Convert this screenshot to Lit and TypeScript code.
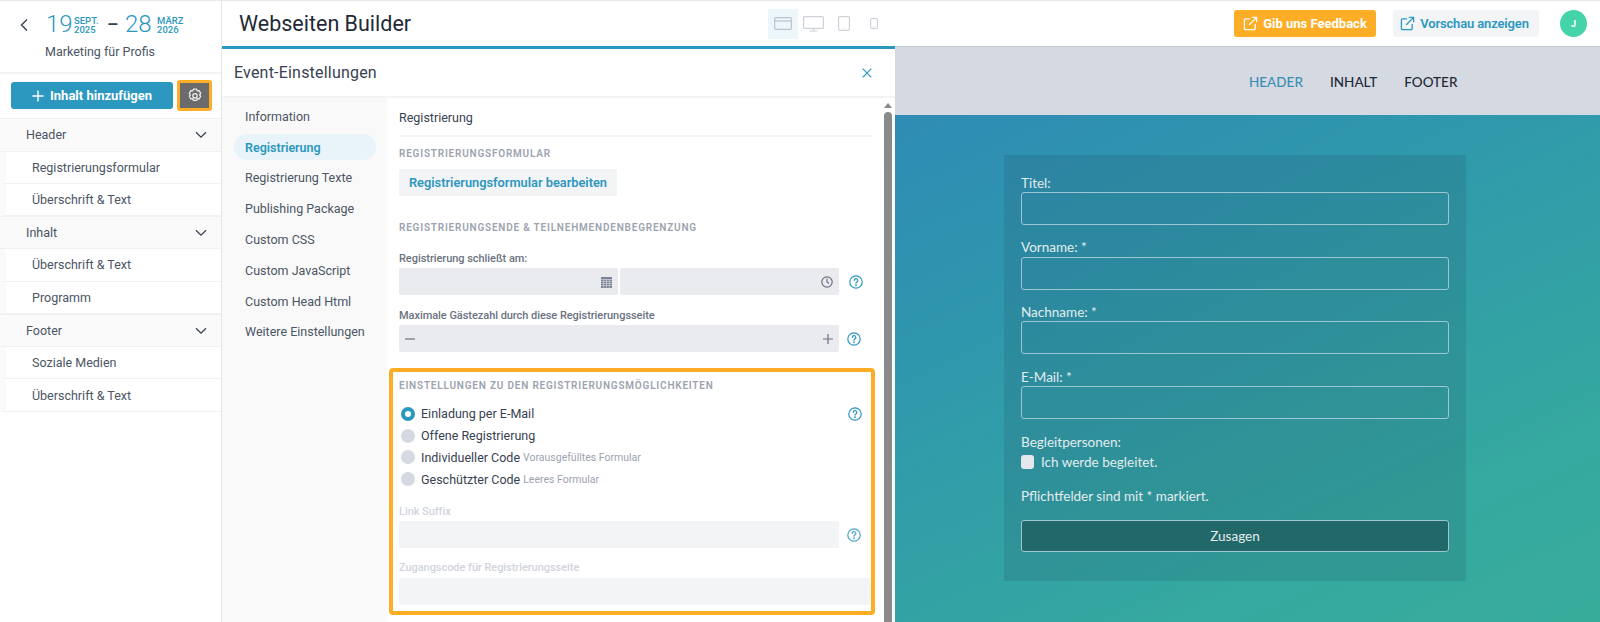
import { LitElement, html, css } from "lit";
import { customElement } from "lit/decorators.js";

const ext = html`<svg class="ext" viewBox="0 0 16 16" fill="none" stroke="currentColor" stroke-width="1.4" stroke-linecap="round" stroke-linejoin="round"><path d="M13 9v4.2a1.3 1.3 0 0 1-1.3 1.3H2.8a1.3 1.3 0 0 1-1.3-1.3V4.3A1.3 1.3 0 0 1 2.8 3H7"/><path d="M10 1.5h4.5V6"/><path d="M14.5 1.5 7 9"/></svg>`;
const chev = html`<svg class="chev" viewBox="0 0 12 8" fill="none" stroke="#374151" stroke-width="1.3"><path d="M1 1.2 6 6.2 11 1.2"/></svg>`;
const help = html`<svg class="help" viewBox="0 0 14 14" fill="none" stroke="#2c97bf" stroke-width="1.2" stroke-linecap="round"><circle cx="7" cy="7" r="6.2"/><path d="M5.2 5.5a1.8 1.8 0 1 1 2.6 1.6c-.5.3-.8.6-.8 1.1"/><circle cx="7" cy="10.2" r=".35"/></svg>`;

@customElement("app-root")
export class AppRoot extends LitElement {
  static styles = css`
    :host { display: block; width: 1600px; height: 622px; overflow: hidden; font-family: Roboto, "Liberation Sans", sans-serif; color: #374151; background: #fff; }
    * { box-sizing: border-box; }
    .app { display: flex; height: 622px; border-top: 1px solid #e5e7eb; }
    .side { width: 222px; flex: none; border-right: 1px solid #e5e7eb; display: flex; flex-direction: column; }
    .brand { height: 73px; border-bottom: 2px solid #f3f4f6; padding: 13px 0 0 16px; }
    .dates { display: flex; align-items: center; height: 21px; color: #2c97bf; }
    .back { width: 12px; height: 14px; margin: 0 16px 0 2px; flex: none; }
    .num { font-size: 24px; font-weight: 300; line-height: 21px; flex: none; }
    .num.a { width: 28px; }
    .num.c { width: 32px; }
    .dm { font-size: 9.5px; line-height: 9px; font-weight: 500; flex: none; }
    .dm.a { width: 33px; }
    .dash { font-size: 18px; width: 18px; flex: none; color: #374151; font-weight: 500; }
    .sub { margin: 9px 0 0 29px; font-size: 12.5px; color: #4b5563; line-height: 16px; }
    .act { display: flex; align-items: center; padding: 6px 0 7px 11px; gap: 4px; }
    .add { width: 162px; height: 27px; border-radius: 3px; background: #2c97bf; color: #fff; font-weight: 700; font-size: 13px; display: flex; align-items: center; justify-content: center; gap: 6px; }
    .add svg { width: 12px; height: 12px; }
    .gear { width: 35px; height: 31px; border: 3px solid #fdae26; border-radius: 3px; background: #6b6b6b; display: flex; align-items: center; justify-content: center; }
    .gear svg { width: 16px; height: 16px; }
    .sec { height: 33.5px; background: #fafafa; border-top: 1px solid #f1f1f1; border-bottom: 1px solid #f1f1f1; display: flex; align-items: center; justify-content: space-between; padding: 0 14px 0 26px; font-size: 12.5px; color: #4b5563; }
    .chev { width: 12px; height: 8px; }
    .it { height: 32.2px; border-left: 6px solid #fafafa; padding-left: 26px; display: flex; align-items: center; font-size: 12.5px; color: #4b5563; border-bottom: 1px solid #f1f1f1; }
    .main { flex: 1; display: flex; flex-direction: column; min-width: 0; }
    .top { height: 45px; display: flex; align-items: center; padding-left: 17px; }
    .top h1 { font-size: 21.5px; font-weight: 400; margin: -1px 0 0; width: 529px; color: #1f2937; }
    .dev { display: flex; width: 466px; align-items: center; }
    .devb { width: 30px; height: 30px; display: flex; align-items: center; justify-content: center; }
    .devb.on { background: #ecf6fb; }
    .devb.t { margin-left: 1px; }
    .devb svg { display: block; }
    .btn { height: 27px; border-radius: 3px; display: flex; align-items: center; justify-content: center; gap: 5px; font-size: 13px; font-weight: 600; }
    .fb { width: 142px; background: #fdae26; color: #fff; font-weight: 700; }
    .pv { width: 146px; background: #f3f4f6; color: #2c97bf; margin-left: 17px; letter-spacing: -.15px; padding-right: 3px; }
    .ext { width: 15px; height: 15px; }
    .ava { width: 27px; height: 27px; border-radius: 50%; background: #45d3a8; color: #fff; font-size: 9px; font-weight: 700; display: flex; align-items: center; justify-content: center; margin-left: 21px; }
    .work { flex: 1; display: flex; min-height: 0; }
    .panel { width: 673px; flex: none; border-top: 3px solid #2c97bf; display: flex; flex-direction: column; }
    .ph { height: 49px; border-bottom: 2px solid #f3f4f6; display: flex; align-items: center; justify-content: space-between; padding: 0 23px 0 12px; font-size: 16px; color: #374151; letter-spacing: .2px; }
    .ph svg { width: 10px; height: 10px; }
    .pb { flex: 1; display: flex; min-height: 0; }
    .nav { width: 165px; flex: none; background: #f9f9f9; padding-left: 12px; padding-top: 3px; }
    .nav div { height: 30.8px; font-size: 12.5px; display: flex; align-items: center; padding-left: 11px; color: #4b5563; width: 142px; border-radius: 13px; }
    .nav .on { color: #2c97bf; background: #e8f4f9; font-weight: 600; height: 26px; margin: 2.4px 0; }
    .cnt { width: 486px; flex: none; padding: 0 0 0 12px; }
    .ct { height: 39px; padding-top: 2px; border-bottom: 2px solid #f3f4f6; font-size: 12.5px; display: flex; align-items: center; color: #374151; width: 472px; }
    .h { font-size: 10px; font-weight: 600; color: #9ca3af; letter-spacing: .8px; text-transform: uppercase; line-height: 12px; }
    .h.t1 { margin-top: 11px; }
    .h.t2 { margin-bottom: 18px; }
    .e { display: flex; align-items: center; justify-content: center; width: 218px; height: 27px; background: #f3f4f6; border-radius: 2px; color: #2c97bf; font-size: 12.8px; font-weight: 600; margin: 9px 0 26px; }
    .lb { font-size: 11px; font-weight: 500; color: #6b7280; line-height: 13px; margin-bottom: 3px; letter-spacing: -.05px; }
    .lb.dis { color: #d1d5db; }
    .lb.gap { margin-top: 15px; }
    .row { display: flex; gap: 2px; align-items: center; height: 27px; margin-bottom: 14px; }
    .row.tight { gap: 0; margin-bottom: 13px; }
    .inp { background: #e9ebef; border-radius: 2px; height: 27px; display: flex; align-items: center; justify-content: space-between; padding: 0 6px; flex: none; }
    .inp.half { width: 219px; justify-content: flex-end; }
    .inp.full { width: 440px; }
    .inp.wide { width: 471px; margin-top: 4px; }
    .inp.off { background: #f3f4f6; }
    .inp svg { display: block; }
    .help { width: 14px; height: 14px; margin-left: 8px; flex: none; }
    .hwrap { display: flex; }
    .hwrap.pull { margin-left: -2px; }
    .hwrap.end { margin-right: 9px; }
    .hwrap.dim { opacity: .85; }
    .box { margin: 16px 0 0 -10px; width: 486px; height: 247px; border: 4px solid #fdae26; border-radius: 4px; padding: 8px 0 0 6px; }
    .rads { margin-top: 11px; }
    .rad { display: flex; align-items: center; height: 21.8px; font-size: 12.5px; color: #374151; }
    .dot { width: 14px; height: 14px; border-radius: 50%; background: #d5d9e0; margin: 0 6px 0 2px; flex: none; }
    .dot.on { background: #fff; border: 4px solid #2c97bf; }
    .s { font-size: 10.5px; color: #9ca3af; margin-left: 3px; }
    .sp { flex: 1; }
    .bar { width: 22px; flex: none; display: flex; flex-direction: column; align-items: flex-end; padding-right: 3px; }
    .tri { width: 0; height: 0; border-left: 4px solid transparent; border-right: 4px solid transparent; border-bottom: 5px solid #8a8a8a; margin-top: 5px; }
    .thumb { width: 8px; flex: 1; margin-top: 4px; background: #8a8a8a; border-radius: 4px 4px 0 0; }
    .pre { flex: 1; display: flex; flex-direction: column; min-width: 0; border-top: 1px solid #c9ccd3; font-family: Lato, sans-serif; }
    .pn { height: 68px; padding-top: 1px; background: #d5d9e1; display: flex; align-items: center; padding-left: 354px; gap: 27px; font-size: 13.5px; color: #1f2937; font-weight: 500; }
    .pn .on { color: #3b8fb5; }
    .hero { flex: 1; background: linear-gradient(155deg, #2f8cb5 0%, #2f97ad 30%, #35a8a0 75%, #38ac9b 100%); padding: 40px 0 0 109px; }
    .fm { width: 462px; height: 426px; background: rgba(30,70,90,.16); padding: 19.5px 17px 0; color: #e2ecef; font-size: 13.5px; }
    .fl { line-height: 17px; margin-bottom: .5px; }
    .fl.b { margin-top: 15.2px; }
    .fi { height: 33px; border: 1px solid #9cc6d1; border-radius: 3px; margin-bottom: 14.2px; }
    .chk { display: flex; align-items: center; gap: 7px; margin-top: 0; height: 20px; }
    .cb { width: 13px; height: 14px; background: #e4e8ec; border-radius: 3px; }
    .nt { margin-top: 16.5px; line-height: 17px; }
    .go { height: 32px; margin-top: 15px; border: 1px solid #9cc6d1; border-radius: 3px; background: #236868; display: flex; align-items: center; justify-content: center; }
  `;

  render() {
    const sidebar = (t: string, items: string[]) => html`<div class="sec">${t}${chev}</div>${items.map((i) => html`<div class="it">${i}</div>`)}`;
    return html`<div class="app">
      <aside class="side">
        <div class="brand">
          <div class="dates">
            <svg class="back" viewBox="0 0 12 14" fill="none" stroke="#374151" stroke-width="1.4"><path d="M9 1.5 3.5 7 9 12.5"/></svg>
            <span class="num a">19</span><span class="dm a">SEPT.<br />2025</span>
            <span class="dash">–</span>
            <span class="num c">28</span><span class="dm">MÄRZ<br />2026</span>
          </div>
          <div class="sub">Marketing für Profis</div>
        </div>
        <div class="act">
          <div class="add"><svg viewBox="0 0 12 12" stroke="#fff" stroke-width="1.4"><path d="M6 .5v11M.5 6h11"/></svg>Inhalt hinzufügen</div>
          <div class="gear"><svg viewBox="0 0 16 16" fill="none" stroke="#e8eaee" stroke-width="1.3" stroke-linejoin="round"><path d="M6.4 1.2h3.2l.7 1.7 1.8-.3 1.6 2.8-1.1 1.4 1.1 1.4-1.6 2.8-1.8-.3-.7 1.7H6.4l-.7-1.7-1.8.3-1.6-2.8 1.1-1.4-1.1-1.4 1.6-2.8 1.8.3z"/><circle cx="8" cy="7.8" r="2.2"/></svg></div>
        </div>
        ${sidebar("Header", ["Registrierungsformular", "Überschrift & Text"])}
        ${sidebar("Inhalt", ["Überschrift & Text", "Programm"])}
        ${sidebar("Footer", ["Soziale Medien", "Überschrift & Text"])}
      </aside>
      <div class="main">
        <header class="top">
          <h1>Webseiten Builder</h1>
          <div class="dev">
            <div class="devb on"><svg width="18" height="13" viewBox="0 0 18 13" fill="none" stroke="#bcc3cd" stroke-width="1.2"><rect x=".6" y=".6" width="16.8" height="11.8" rx="1.5"/><path d="M.6 4h16.8"/></svg></div>
            <div class="devb"><svg width="21" height="16" viewBox="0 0 21 16" fill="none" stroke="#cdd2da" stroke-width="1.2"><rect x=".6" y=".6" width="19.8" height="11.8" rx="1"/><path d="M10.5 12.4v2.6M6.5 15h8"/></svg></div>
            <div class="devb t"><svg width="12" height="15" viewBox="0 0 12 15" fill="none" stroke="#cdd2da" stroke-width="1.2"><rect x=".6" y=".6" width="10.8" height="13.8" rx="1.5"/><path d="M5.6 12h.8"/></svg></div>
            <div class="devb"><svg width="8" height="11" viewBox="0 0 8 11" fill="none" stroke="#cdd2da" stroke-width="1.1"><rect x=".6" y=".6" width="6.8" height="9.8" rx="1.2"/><path d="M3.6 8.5h.8"/></svg></div>
          </div>
          <div class="btn fb">${ext}Gib uns Feedback</div>
          <div class="btn pv">${ext}Vorschau anzeigen</div>
          <div class="ava">J</div>
        </header>
        <div class="work">
          <section class="panel">
            <div class="ph">Event-Einstellungen<svg viewBox="0 0 10 10" stroke="#2c97bf" stroke-width="1.2"><path d="M.7.7l8.6 8.6M9.3.7.7 9.3"/></svg></div>
            <div class="pb">
              <nav class="nav">
                <div>Information</div><div class="on">Registrierung</div><div>Registrierung Texte</div><div>Publishing Package</div><div>Custom CSS</div><div>Custom JavaScript</div><div>Custom Head Html</div><div>Weitere Einstellungen</div>
              </nav>
              <div class="cnt">
                <div class="ct">Registrierung</div>
                <div class="h t1">Registrierungsformular</div>
                <div class="e">Registrierungsformular bearbeiten</div>
                <div class="h t2">Registrierungsende &amp; Teilnehmendenbegrenzung</div>
                <div class="lb">Registrierung schließt am:</div>
                <div class="row">
                  <div class="inp half"><svg width="11" height="12" viewBox="0 0 11 12"><path fill="#7b8494" d="M0 1h11v11H0z"/><path stroke="#e9ebef" stroke-width=".5" d="M0 3.5h11M0 5.5h11M0 7.5h11M0 9.5h11M2.75 3v9M5.5 3v9M8.25 3v9"/></svg></div>
                  <div class="inp half"><svg width="12" height="12" viewBox="0 0 12 12" fill="none" stroke="#6b7280" stroke-width="1.2"><circle cx="6" cy="6" r="5.2"/><path d="M6 2.8V6l2 1.4"/></svg></div>
                  ${help}
                </div>
                <div class="lb">Maximale Gästezahl durch diese Registrierungsseite</div>
                <div class="row">
                  <div class="inp full"><svg width="10" height="2" viewBox="0 0 10 2"><path stroke="#6b7280" stroke-width="1.2" d="M0 1h10"/></svg><svg width="10" height="10" viewBox="0 0 10 10"><path stroke="#6b7280" stroke-width="1.2" d="M0 5h10M5 0v10"/></svg></div>
                  <div class="hwrap pull">${help}</div>
                </div>
                <div class="box">
                  <div class="h">Einstellungen zu den Registrierungsmöglichkeiten</div>
                  <div class="rads">
                    <div class="rad"><span class="dot on"></span>Einladung per E-Mail<span class="sp"></span><span class="hwrap end">${help}</span></div>
                    <div class="rad"><span class="dot"></span>Offene Registrierung</div>
                    <div class="rad"><span class="dot"></span>Individueller Code<span class="s">Vorausgefülltes Formular</span></div>
                    <div class="rad"><span class="dot"></span>Geschützter Code<span class="s">Leeres Formular</span></div>
                  </div>
                  <div class="lb dis gap">Link Suffix</div>
                  <div class="row tight">
                    <div class="inp full off"></div>
                    <span class="hwrap dim">${help}</span>
                  </div>
                  <div class="lb dis">Zugangscode für Registrierungsseite</div>
                  <div class="inp wide off"></div>
                </div>
              </div>
              <div class="bar"><div class="tri"></div><div class="thumb"></div></div>
            </div>
          </section>
          <section class="pre">
            <div class="pn"><span class="on">HEADER</span><span>INHALT</span><span>FOOTER</span></div>
            <div class="hero">
              <div class="fm">
                ${["Titel:", "Vorname: *", "Nachname: *", "E-Mail: *"].map((l) => html`<div class="fl">${l}</div><div class="fi"></div>`)}
                <div class="fl b">Begleitpersonen:</div>
                <div class="chk"><span class="cb"></span>Ich werde begleitet.</div>
                <div class="nt">Pflichtfelder sind mit * markiert.</div>
                <div class="go">Zusagen</div>
              </div>
            </div>
          </section>
        </div>
      </div>
    </div>`;
  }
}
